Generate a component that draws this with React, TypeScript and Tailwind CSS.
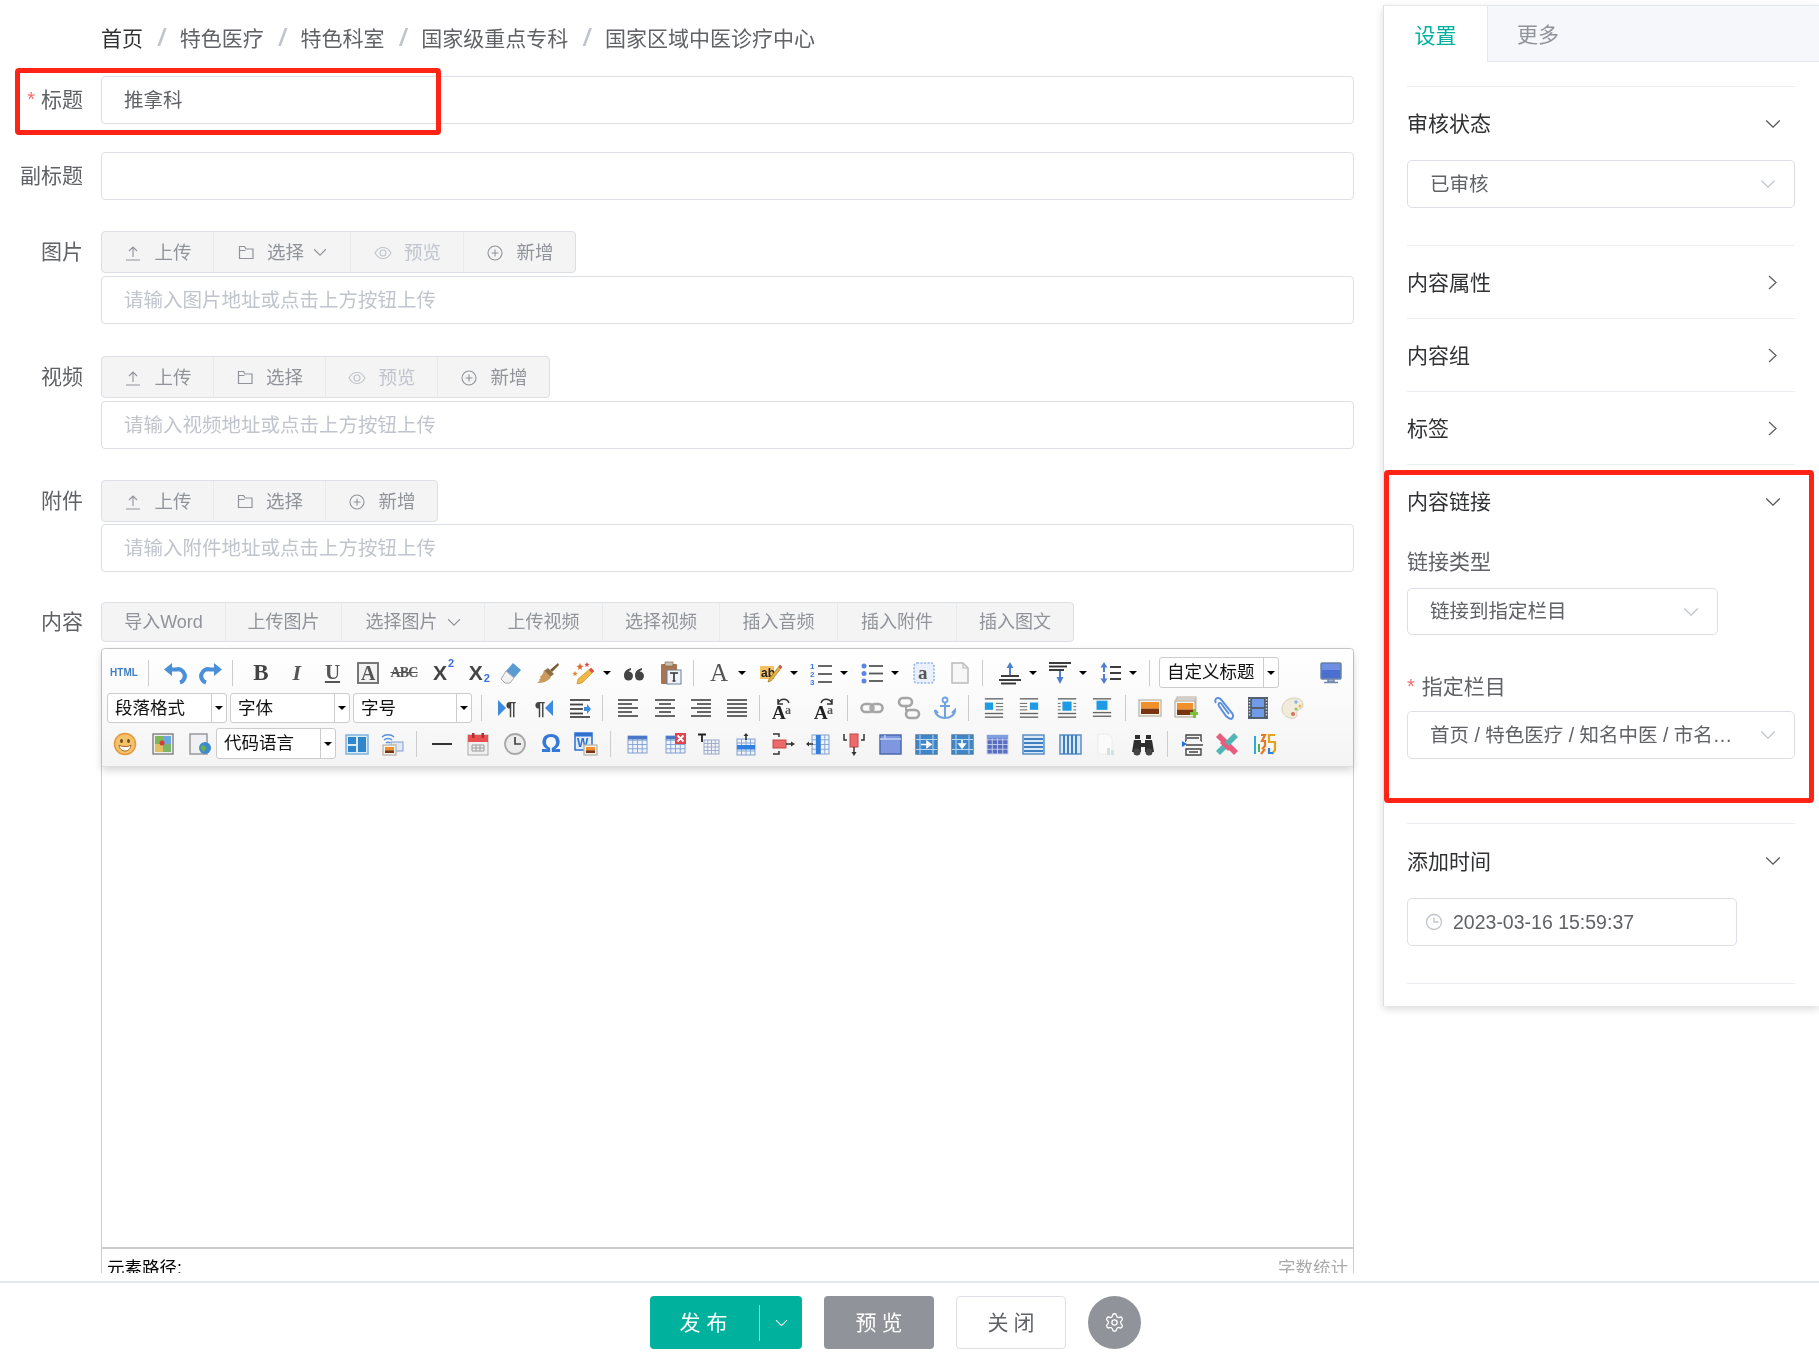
import React from "react";
import { Settings } from "lucide-react";

const ChevDown = ({ c = "#606266", w = 16, sw = 1.3 }: { c?: string; w?: number; sw?: number }) => (
  <svg width={w} height={w * 0.6} viewBox="0 0 16 10" fill="none" stroke={c} strokeWidth={sw}>
    <path d="M1 1.5 8 8.5 15 1.5" />
  </svg>
);
const ChevRight = () => (
  <svg width="9" height="15" viewBox="0 0 9 15" fill="none" stroke="#606266" strokeWidth="1.3">
    <path d="M1 1 8 7.5 1 14" />
  </svg>
);
const UploadI = () => (
  <svg width="16" height="16" viewBox="0 0 16 16" fill="none" stroke="#909399" strokeWidth="1.1">
    <path d="M8 12V2M4 6l4-4 4 4M1 15h14" />
  </svg>
);
const FolderI = () => (
  <svg width="17" height="15" viewBox="0 0 17 15" fill="none" stroke="#909399" strokeWidth="1.2">
    <path d="M1.5 13.5V1.5h5l1.5 2.5h7v9.5zM1.5 5.5h6" />
  </svg>
);
const EyeI = () => (
  <svg width="18" height="14" viewBox="0 0 18 14" fill="none" stroke="#c0c4cc" strokeWidth="1.1">
    <path d="M1 7c2-3.6 5-5.5 8-5.5S15 3.400 17 7c-2 3.600-5 5.500-8 5.500S3 10.600 1 7z" />
    <circle cx="9" cy="7" r="3" />
  </svg>
);
const PlusI = () => (
  <svg width="16" height="16" viewBox="0 0 16 16" fill="none" stroke="#909399" strokeWidth="1.1">
    <circle cx="8" cy="8" r="7" />
    <path d="M8 4.500v7M4.500 8h7" />
  </svg>
);
const ClockI = () => (
  <svg width="18" height="18" viewBox="0 0 18 18" fill="none" stroke="#c0c4cc" strokeWidth="1.3">
    <circle cx="9" cy="9" r="7.500" />
    <path d="M9 4.500V9h4.500" />
  </svg>
);

/* ---------- editor icons ---------- */
const S = ({ children, w = 24, h = 24 }: { children: React.ReactNode; w?: number; h?: number }) => (
  <svg width={w} height={h} viewBox="0 0 24 24" fill="none">
    {children}
  </svg>
);
const Ls = ({ ys, x1 = 4, x2 = 20, c = "#555", sw = 1.7, short }: { ys: number[]; x1?: number; x2?: number; c?: string; sw?: number; short?: (i: number) => [number, number] }) => (
  <>
    {ys.map((y, i) => {
      const [a, b] = short ? short(i) : [x1, x2];
      return <path key={y} d={`M${a} ${y}H${b}`} stroke={c} strokeWidth={sw} />;
    })}
  </>
);
const Undo = () => (
  <S>
    <path d="M7 8.500h6a6.500 6.500 0 0 1 4 13" stroke="#4a90d9" strokeWidth="4.200" />
    <path d="M1 8.500l8-6.500v13z" fill="#4a90d9" />
  </S>
);
const Redo = () => (
  <S>
    <path d="M17 8.500h-6a6.500 6.500 0 0 0-4 13" stroke="#4a90d9" strokeWidth="4.200" />
    <path d="M23 8.500l-8-6.500v13z" fill="#4a90d9" />
  </S>
);
const Letter = ({ t, cls }: { t: string; cls: string }) => <span className={cls}>{t}</span>;
const ABox = () => (
  <div className="flex h-[22px] w-[22px] items-center justify-center border-2 border-[#777] bg-[#f2f2f2] font-['Liberation_Serif',serif] text-[20px] leading-none font-bold text-[#555]">A</div>
);
const Abc = () => (
  <span className="font-['Liberation_Serif',serif] text-[14px] font-bold tracking-[-0.8px] text-[#555] line-through">ABC</span>
);
const Sup = ({ sub }: { sub?: boolean }) => (
  <span className="relative font-['Liberation_Sans',sans-serif] text-[21px] leading-none font-bold text-[#444]">
    X
    <span className={sub ? "absolute top-[11px] left-[15px] text-[11px] text-[#3a6fe0]" : "absolute top-[-4px] left-[15px] text-[11px] text-[#3a6fe0]"}>2</span>
  </span>
);
const Eraser = () => (
  <S>
    <path d="M14 2l8 7-7 8-8-7z" fill="#5b9bd5" />
    <path d="M7 10l8 7-4 5H6l-4-4z" fill="#f2f2f2" stroke="#aaa" />
  </S>
);
const Brush = () => (
  <S>
    <path d="M23 2l-8 7 2 2 7-7z" fill="#7a5a30" />
    <path d="M13 7l6 6-4 3-6-6z" fill="#8c6d46" />
    <path d="M9 9l7 7c-3 5-9 6-14 6 3-2 3-3 2-4 2 0 2-1 1-3 2 0 3-2 4-6z" fill="#c99a5b" />
  </S>
);
const Wand = () => (
  <S>
    <path d="M20 7l3 3-12 12-5 1 1-5z" fill="#f0b840" stroke="#b8862b" strokeWidth=".6" />
    <path d="M20 7l3 3-2 2-3-3z" fill="#e04a4a" />
    <path d="M9 2l1 2.500 2.500.5-2 1.500.5 2.500-2-1.500-2 1.500.5-2.500-2-1.500 2.500-.5z" fill="#e8662a" />
    <path d="M16 1l.8 1.800 1.800.2-1.400 1.200.4 1.800-1.600-1-1.600 1 .4-1.800L13.400 3l1.800-.2z" fill="#e04a4a" />
    <path d="M4 10l.8 1.800 1.800.2-1.400 1.200.4 1.800L4 14l-1.600 1 .4-1.800L1.400 12l1.800-.2z" fill="#e8862a" />
  </S>
);
const Quote = () => (
  <S>
    <circle cx="6.500" cy="15" r="4.500" fill="#444" />
    <path d="M2 15c0-5 3-7 7-8v2c-2 .5-3 2-3 4z" fill="#444" />
    <circle cx="17.500" cy="15" r="4.500" fill="#444" />
    <path d="M13 15c0-5 3-7 7-8v2c-2 .5-3 2-3 4z" fill="#444" />
  </S>
);
const Paste = () => (
  <S>
    <rect x="3" y="3" width="16" height="20" rx="1" fill="#a9744f" />
    <rect x="7" y="1" width="8" height="4" fill="#c9c2b4" stroke="#7a5a3c" strokeWidth=".6" />
    <rect x="9" y="9" width="14" height="14" fill="#eef3fb" stroke="#6a7f9c" />
    <path d="M12 12h8M16 12v8M14.500 20h3" stroke="#333" strokeWidth="1.600" />
  </S>
);
const FontColor = () => <span className="font-['Liberation_Serif',serif] text-[25px] leading-none text-[#555]">A</span>;
const Highlight = () => (
  <S>
    <rect x="1" y="5" width="14" height="13" fill="#f5c163" />
    <text x="2" y="16" fontSize="12" fontWeight="700" fontFamily="Liberation Sans" fill="#222">ab</text>
    <path d="M21 4l2 2-11 14-3 1 1-3z" fill="#e8b23a" stroke="#8c6a20" strokeWidth=".6" />
    <path d="M21 4l2 2-1.500 2-2-2z" fill="#d9534f" />
  </S>
);
const OL = () => (
  <S>
    <text x="1" y="8" fontSize="8" fontWeight="700" fontFamily="Liberation Sans" fill="#3a78e0">1</text>
    <text x="1" y="16" fontSize="8" fontWeight="700" fontFamily="Liberation Sans" fill="#3a78e0">2</text>
    <text x="1" y="24" fontSize="8" fontWeight="700" fontFamily="Liberation Sans" fill="#3a78e0">3</text>
    <Ls ys={[5, 13, 21]} x1={9} x2={23} sw={1.800} />
  </S>
);
const UL = () => (
  <S>
    <circle cx="4" cy="5" r="2.500" fill="#5b86e0" />
    <circle cx="4" cy="12.500" r="2.500" fill="#5b86e0" />
    <circle cx="4" cy="20" r="2.500" fill="#5b86e0" />
    <Ls ys={[5, 12.500, 20]} x1={9} x2={23} sw={1.800} />
  </S>
);
const DashA = () => (
  <S>
    <rect x="2" y="2" width="20" height="20" rx="3" fill="#eaf1fd" stroke="#8fb4ee" strokeWidth="1.600" strokeDasharray="2 1.500" />
    <text x="6" y="18" fontSize="19" fontWeight="700" fontFamily="Liberation Serif" fill="#555">a</text>
  </S>
);
const Page = () => (
  <S>
    <path d="M4 2h11l5 5v15H4z" fill="#f7f7f7" stroke="#bbb" strokeWidth="1.500" />
    <path d="M15 2v5h5" stroke="#bbb" strokeWidth="1.200" />
  </S>
);
const LineUp = () => (
  <S>
    <path d="M12 1l3.500 6h-2.500v7h-2V7H8.500z" fill="#4f7fcc" />
    <Ls ys={[15, 19, 22.500]} x1={1} x2={20} c="#333" sw={1.900} short={(i) => (i === 0 ? [3, 21] : i === 1 ? [1, 23] : [3, 18])} />
  </S>
);
const LineDown = () => (
  <S>
    <Ls ys={[2, 5.500, 9]} c="#333" sw={1.900} short={(i) => (i === 0 ? [1, 23] : i === 1 ? [1, 19] : [1, 16])} />
    <path d="M11 10v6H8.500l3.500 7 3.500-7H13v-6z" fill="#4f7fcc" />
  </S>
);
const LineBoth = () => (
  <S>
    <path d="M6 1l3.500 5.500H7V11H5V6.500H2.500zM6 23l3.500-5.500H7V13H5v4.500H2.500z" fill="#4f7fcc" />
    <Ls ys={[6, 12, 18]} x1={12} x2={23} c="#333" sw={1.900} />
  </S>
);
const Monitor = () => (
  <S>
    <rect x="2" y="2" width="20" height="16" rx="1" fill="#4a6fd0" stroke="#6f87a8" strokeWidth="1.500" />
    <path d="M3 3h18v6H3z" fill="#6f8fe3" />
    <path d="M9 18h6v3H9zM5 21.500h14" stroke="#6f87a8" strokeWidth="1.500" fill="#9fb0c8" />
  </S>
);
const Pil = ({ rev }: { rev?: boolean }) => (
  <span className="flex items-center">
    {rev ? null : <span className="h-0 w-0 border-y-[8px] border-l-[8px] border-y-transparent border-l-[#3c8be0]" />}
    <span className="font-['Liberation_Sans',sans-serif] text-[19px] leading-none font-bold text-[#444]">¶</span>
    {rev ? <span className="h-0 w-0 border-y-[8px] border-r-[8px] border-y-transparent border-r-[#3c8be0]" /> : null}
  </span>
);
const Indent = () => (
  <S>
    <Ls ys={[4, 8.500, 13, 17.500, 21]} sw={1.800} c="#444" short={(i) => (i === 2 ? [2, 15] : i === 1 ? [2, 15] : i === 3 ? [2, 15] : [2, 22])} />
    <path d="M16 11h3V8l4 5-4 5v-3h-3z" fill="#3c8be0" />
  </S>
);
const Align = ({ m }: { m: "l" | "c" | "r" | "j" }) => {
  const f = (i: number): [number, number] => {
    const sh = i % 2 === 1;
    if (m === "j" || !sh) return [2, 22];
    if (m === "l") return [2, 16];
    if (m === "r") return [8, 22];
    return [6, 18];
  };
  return (
    <S>
      <Ls ys={[4, 8, 12, 16, 20]} sw={1.800} c="#555" short={f} />
    </S>
  );
};
const AaDir = ({ flip }: { flip?: boolean }) => (
  <S>
    <text x="1" y="23" fontSize="19" fontWeight="700" fontFamily="Liberation Serif" fill="#222">A</text>
    <text x="14" y="18" fontSize="12" fontWeight="700" fontFamily="Liberation Serif" fill="#555">a</text>
    {flip ? (
      <path d="M8 7c2-5 8-5 11 0M19 3v5h-5" stroke="#333" strokeWidth="1.500" />
    ) : (
      <path d="M18 7c-2-5-8-5-11 0M7 3v5h5" stroke="#333" strokeWidth="1.500" />
    )}
  </S>
);
const Link1 = () => (
  <S>
    <rect x="1.500" y="8" width="12" height="8" rx="4" stroke="#a5a5a5" strokeWidth="2.600" />
    <rect x="10.500" y="8" width="12" height="8" rx="4" stroke="#a5a5a5" strokeWidth="2.600" />
  </S>
);
const Unlink = () => (
  <S>
    <rect x="2" y="2" width="13" height="8" rx="4" stroke="#a5a5a5" strokeWidth="2.600" />
    <rect x="9" y="14" width="13" height="8" rx="4" stroke="#a5a5a5" strokeWidth="2.600" />
    <path d="M9 10v4h6" stroke="#a5a5a5" strokeWidth="2" />
  </S>
);
const AnchorI = () => (
  <S>
    <circle cx="12" cy="4" r="2.500" stroke="#6fa3dc" strokeWidth="1.800" />
    <path d="M12 6.500V22M7 10h10" stroke="#6fa3dc" strokeWidth="2" />
    <path d="M2 14c0 5 5 8 10 8s10-3 10-8l-3 3M2 14l3 3" stroke="#6fa3dc" strokeWidth="2" />
  </S>
);
const ImgPos = ({ v }: { v: "l" | "r" | "c" | "b" }) => {
  const box = v === "l" ? [2, 6, 9, 8] : v === "r" ? [13, 6, 9, 8] : v === "c" ? [7, 5, 10, 10] : [6, 4, 12, 10];
  return (
    <S w={22} h={22}>
      <rect x={box[0]} y={box[1]} width={box[2]} height={box[3]} fill="#1f9be6" />
      {v === "b" ? (
        <Ls ys={[2, 17, 21]} x1={2} x2={22} c="#666" sw={1.500} />
      ) : (
        <>
          <Ls ys={[2]} x1={2} x2={22} c="#666" sw={1.500} />
          <Ls ys={[18, 22]} x1={2} x2={22} c="#666" sw={1.500} />
          {v === "l" ? <Ls ys={[7, 10.500, 14]} x1={14} x2={22} c="#777" sw={1.200} /> : null}
          {v === "r" ? <Ls ys={[7, 10.500, 14]} x1={2} x2={10} c="#777" sw={1.200} /> : null}
          {v === "c" ? <Ls ys={[7, 10.500, 14]} x1={2} x2={5} c="#777" sw={1.200} /> : null}
          {v === "c" ? <Ls ys={[7, 10.500, 14]} x1={19} x2={22} c="#777" sw={1.200} /> : null}
        </>
      )}
    </S>
  );
};
const Sunset = ({ x, y, w, h }: { x: number; y: number; w: number; h: number }) => (
  <>
    <rect x={x} y={y} width={w} height={h} fill="#f6f4ef" stroke="#b5b0a5" strokeWidth="1.200" />
    <rect x={x + 2} y={y + 2} width={w - 4} height={(h - 4) * 0.55} fill="#f0902a" />
    <rect x={x + 2} y={y + 2 + (h - 4) * 0.55} width={w - 4} height={(h - 4) * 0.45} fill="#7a3510" />
  </>
);
const ImageI = () => (
  <S>
    <Sunset x={1} y={4} w={22} h={16} />
  </S>
);
const Multi = () => (
  <S>
    <rect x="3" y="1" width="19" height="14" fill="#f2eee5" stroke="#b5b0a5" />
    <rect x="2" y="3" width="19" height="14" fill="#f2eee5" stroke="#b5b0a5" />
    <Sunset x={1} y={5} w={20} h={16} />
    <path d="M19 13h3v3h2v3h-2v3h-3v-3h-3v-3h3z" fill="#7cbf3a" />
  </S>
);
const Clip = () => (
  <S>
    <path d="M4 7c-2-3 0-5 2-5s3 1 5 4l9 11c2 3 1 5-1 6-2 0-3-1-5-3L7 10c-1-2 0-3 1-3s2 1 3 3l6 8" stroke="#5b8fe0" strokeWidth="2" />
  </S>
);
const Film = () => (
  <S>
    <rect x="2" y="1" width="20" height="22" fill="#55606e" />
    <rect x="6" y="3" width="12" height="8" fill="#6f9be8" />
    <rect x="6" y="13" width="12" height="8" fill="#6f9be8" />
    <path d="M3.500 3v18M20.500 3v18" stroke="#c6ccd4" strokeWidth="1.500" strokeDasharray="1.500 1.500" />
  </S>
);
const Palette = () => (
  <S>
    <path d="M2 13C2 6 8 2 15 2c5 0 8 3 8 7 0 4-3 4-5 5-2 1-1 3-1 5 0 3-4 4-7 3-4-1-8-4-8-9z" fill="#f1ecd9" stroke="#d4cfbd" />
    <circle cx="16" cy="6" r="1.800" fill="#8db4e8" />
    <circle cx="20" cy="10" r="1.500" fill="#e8b85a" />
    <circle cx="16" cy="13" r="1.500" fill="#9fc15b" />
    <circle cx="13" cy="18" r="2" fill="#d9705a" />
  </S>
);
const Emoji = () => (
  <S>
    <circle cx="12" cy="12" r="10.500" fill="#f4c26b" stroke="#e49a3d" strokeWidth="1.500" />
    <ellipse cx="8.500" cy="9" rx="1.400" ry="2" fill="#6a4a1a" />
    <ellipse cx="15.500" cy="9" rx="1.400" ry="2" fill="#6a4a1a" />
    <path d="M6 13c2 2 10 2 12 0-.5 4-3 6-6 6s-5.500-2-6-6z" fill="#fff" stroke="#a5651f" />
  </S>
);
const MapI = () => (
  <S>
    <rect x="2" y="2" width="20" height="20" fill="#eee" stroke="#888" strokeWidth="1.500" />
    <rect x="4" y="4" width="8" height="8" fill="#7fb85a" />
    <rect x="12" y="4" width="8" height="8" fill="#6aa8e0" />
    <rect x="4" y="12" width="8" height="8" fill="#e0c060" />
    <rect x="12" y="12" width="8" height="8" fill="#79b56a" />
    <circle cx="11" cy="11" r="2.500" fill="#d83a3a" />
  </S>
);
const Web = () => (
  <S>
    <rect x="2" y="2" width="17" height="20" fill="#eef0f4" stroke="#999" strokeWidth="1.500" />
    <circle cx="17" cy="16" r="6" fill="#3d8ad0" />
    <path d="M13 14c2-2 4 0 5 1s-1 3-2 5c-2-1-4-3-3-6z" fill="#6db04a" />
  </S>
);
const Tpl = () => (
  <S>
    <rect x="1" y="3" width="22" height="19" fill="#dcebf8" stroke="#7fb2dd" strokeWidth="1.500" />
    <rect x="3" y="5" width="8" height="7" fill="#2f86cc" />
    <rect x="13" y="5" width="8" height="15" fill="#2f86cc" />
    <rect x="3" y="14" width="8" height="6" fill="#2f86cc" />
  </S>
);
const WifiImg = () => (
  <S>
    <path d="M2 5c3-3 9-3 12 0M4 8c2-2 6-2 8 0M6 11c1-1 3-1 4 0" stroke="#5b8fe0" strokeWidth="1.500" />
    <rect x="11" y="10" width="12" height="9" fill="#dfe8f5" stroke="#7f9fd0" />
    <Sunset x={3} y={13} w={13} h={10} />
  </S>
);
const Hr = () => (
  <S>
    <path d="M2 12h20" stroke="#333" strokeWidth="2" />
  </S>
);
const Cal = () => (
  <S>
    <rect x="2" y="3" width="20" height="20" fill="#f0f0f0" stroke="#aaa" />
    <rect x="2" y="3" width="20" height="7" fill="#e85050" />
    <rect x="6" y="1" width="2.500" height="5" fill="#b03030" />
    <rect x="15.500" y="1" width="2.500" height="5" fill="#b03030" />
    <path d="M6 13h12v6H6zM6 16h12M10 13v6M14 13v6" stroke="#999" strokeWidth="1" />
  </S>
);
const Clock = () => (
  <S>
    <circle cx="12" cy="12" r="10" fill="#ececec" stroke="#a8a8a8" strokeWidth="1.800" />
    <path d="M12 5v7h6" stroke="#444" strokeWidth="1.700" />
  </S>
);
const Omega = () => <span className="font-['Liberation_Sans',sans-serif] text-[25px] leading-none font-bold text-[#3478dc]">Ω</span>;
const Word = () => (
  <S>
    <rect x="1" y="1" width="17" height="17" fill="#dfeafa" stroke="#2f6fd0" strokeWidth="1.500" />
    <rect x="1" y="1" width="17" height="3.500" fill="#2f6fd0" />
    <text x="3" y="15" fontSize="12" fontWeight="700" fontFamily="Liberation Sans" fill="#2f6fd0">W</text>
    <Sunset x={10} y={13} w={13} h={10} />
  </S>
);
const Grid = ({ top = true, x = 3, y = 4, w = 19, h = 17, c = "#7f9fd0", fill = "#eef3fb" }: { top?: boolean; x?: number; y?: number; w?: number; h?: number; c?: string; fill?: string }) => {
  const vs = [1, 2, 3].map((i) => x + (w * i) / 4);
  const hs = [1, 2, 3].map((i) => y + (h * i) / 4);
  return (
    <>
      <rect x={x} y={y} width={w} height={h} fill={fill} stroke={c} />
      {vs.map((v) => <path key={v} d={`M${v} ${y}v${h}`} stroke={c} strokeWidth=".9" />)}
      {hs.map((v) => <path key={v} d={`M${x} ${v}h${w}`} stroke={c} strokeWidth=".9" />)}
      {top ? <rect x={x} y={y} width={w} height={h / 5} fill="#4a78c8" /> : null}
    </>
  );
};
const T1 = () => <S><Grid /></S>;
const TDel = () => (
  <S>
    <Grid />
    <rect x="12" y="1" width="11" height="11" fill="#e8404a" />
    <path d="M14.500 3.500l6 6m0-6l-6 6" stroke="#fff" strokeWidth="2" />
  </S>
);
const TT = () => (
  <S>
    <path d="M1 2.500h8M5 2.500V10" stroke="#222" strokeWidth="1.800" />
    <Grid top={false} x={7} y={8} w={15} h={14} c="#9aa8c4" />
  </S>
);
const RowIns = () => (
  <S>
    <Grid top={false} x={3} y={7} w={18} h={16} />
    <rect x="3" y="13" width="18" height="4.500" fill="#2f80e0" />
    <path d="M12 1l-2.500 3h1.700v4h1.600V4h1.700z" fill="#333" />
  </S>
);
const RowDel = () => (
  <S>
    <path d="M8 5V2H2M8 19v3H2" stroke="#333" strokeWidth="1.500" />
    <rect x="2" y="8" width="13" height="8" fill="#ee6a6a" stroke="#c04848" />
    <path d="M15 12h6" stroke="#333" strokeWidth="1.500" />
    <path d="M24 12l-4-2.500v5z" fill="#333" />
  </S>
);
const ColIns = () => (
  <S>
    <Grid top={false} x={6} y={3} w={17} h={19} />
    <rect x="10" y="3" width="4.500" height="19" fill="#2f80e0" />
    <path d="M0 12l3 2.500v-1.700h4v-1.600H3V9.500z" fill="#333" />
  </S>
);
const ColDel = () => (
  <S>
    <path d="M5 8H2V2M19 8h3V2" stroke="#333" strokeWidth="1.500" />
    <rect x="8" y="2" width="8" height="13" fill="#ee6a6a" stroke="#c04848" />
    <path d="M12 15v5" stroke="#333" strokeWidth="1.500" />
    <path d="M12 24l-2.500-4h5z" fill="#333" />
  </S>
);
const Merge = () => (
  <S>
    <rect x="2" y="3" width="21" height="19" fill="#7f97e0" stroke="#4a6aae" strokeWidth="1.500" />
    <path d="M2 7h21M7 3v4" stroke="#c5d4f2" strokeWidth="1.300" />
  </S>
);
const Split = ({ down }: { down?: boolean }) => (
  <S>
    <rect x="2" y="3" width="21" height="19" fill="#3f86c8" stroke="#4a7fb0" strokeWidth="1.500" />
    <path d="M2 7.500h21M2 17.500h21M6 3v19M19 3v19" stroke="#bcd8f0" strokeWidth="1" />
    {down ? (
      <path d="M12 8v6M9 12l3 4 3-4z" stroke="#fff" strokeWidth="1.600" fill="#fff" />
    ) : (
      <path d="M7 12.500h8M13 9.500l4 3-4 3z" stroke="#fff" strokeWidth="1.600" fill="#fff" />
    )}
  </S>
);
const Cells = () => (
  <S>
    <Grid top={false} x={2} y={3} w={21} h={19} c="#c8d4ee" fill="#5a6cc0" />
    <rect x="2" y="3" width="21" height="3.500" fill="#7fa0dd" />
  </S>
);
const Rows = () => (
  <S>
    <rect x="2" y="3" width="21" height="19" fill="#dbe8f6" stroke="#5a8fc4" strokeWidth="1.500" />
    <path d="M3 7h19M3 11h19M3 15h19M3 19h19" stroke="#3f80c0" strokeWidth="2.200" />
  </S>
);
const Cols = () => (
  <S>
    <rect x="2" y="3" width="21" height="19" fill="#dbe8f6" stroke="#5a8fc4" strokeWidth="1.500" />
    <path d="M6 3v19M10 3v19M14 3v19M18 3v19" stroke="#3f80c0" strokeWidth="2" />
  </S>
);
const Faint = () => (
  <S>
    <path d="M5 2h10l4 4v16H5z" fill="#fbfbfb" stroke="#ececec" />
    <rect x="14" y="16" width="3" height="7" fill="#cfe4d4" />
    <rect x="18" y="18" width="3" height="5" fill="#cfe0ee" />
  </S>
);
const Binoc = () => (
  <S>
    <path d="M4 3h5v4H4zM15 3h5v4h-5zM3 8h7v3h4V8h7l2 12h-9v-5h-4v5H1z" fill="#2e2e2e" />
    <circle cx="6" cy="20" r="3.500" fill="#444" />
    <circle cx="18" cy="20" r="3.500" fill="#444" />
  </S>
);
const PrintI = () => (
  <S>
    <path d="M5 9V3h15v6M5 9h-1M20 9h1M6 6h12" stroke="#444" strokeWidth="1.400" />
    <path d="M5 13H22M5 23v-6h15v6zM8 20h9" stroke="#444" strokeWidth="1.400" />
    <path d="M1 9l5 3-5 3z" fill="#2f6fd0" />
  </S>
);
const XI = () => (
  <S>
    <path d="M5 1l18 18-4 4L1 5z" fill="#e85d7d" />
    <path d="M19 1L1 19l4 4L23 5z" fill="#4fb5b5" />
    <path d="M8 8l8 8-3 3-8-8z" fill="#e85d7d" />
  </S>
);
const Num = () => (
  <S>
    <path d="M2 4v18" stroke="#2ea8e0" strokeWidth="2" />
    <path d="M8 3h4l-3 6h3v5l-3 3M8 22l4-5" stroke="#ea7a20" strokeWidth="2.200" />
    <path d="M22 3h-6v7h6v8l-3 4" stroke="#e8a020" strokeWidth="2.200" />
    <path d="M16 16v5h4" stroke="#2f80e0" strokeWidth="2.200" />
    <path d="M6 12v8" stroke="#55b04a" strokeWidth="2" />
  </S>
);

const C = ({ c = "", w = "w-[36px]", children }: { c?: string; w?: string; children: React.ReactNode }) => (
  <div className={`flex h-full shrink-0 items-center justify-center ${w} ${c}`}>{children}</div>
);
const Dd = ({ c = "w-[34px]", children }: { c?: string; children: React.ReactNode }) => (
  <>
    <div className={`flex h-full shrink-0 items-center justify-center ${c}`}>{children}</div>
    <div className="flex h-full w-[12px] shrink-0 items-center justify-center">
      <span className="h-0 w-0 border-x-[4px] border-t-[4px] border-x-transparent border-t-black" />
    </div>
  </>
);
const Sep = ({ c = "" }: { c?: string }) => <div className={`h-[26px] w-px shrink-0 bg-[#ccc] ${c}`} />;
const TbSelect = ({ text, c = "w-[120px]" }: { text: string; c?: string }) => (
  <div className={`flex h-full shrink-0 items-center rounded-[3px] border border-[#ccc] bg-white text-[17.500px] text-[#111] ${c}`}>
    <span className="flex-1 pl-[7px] whitespace-nowrap">{text}</span>
    <span className="flex h-full w-[15px] shrink-0 items-center justify-center border-l border-[#ccc]">
      <span className="h-0 w-0 border-x-[4px] border-t-[4px] border-x-transparent border-t-black" />
    </span>
  </div>
);

const W = "w-[35.800px]";
const Toolbar = () => (
  <div className="flex h-[118px] flex-col gap-[5px] rounded-t-[4px] border-b border-[#ddd] bg-gradient-to-b from-white to-[#f4f4f4] pt-[8px] pb-[7px] shadow-[0_3px_8px_rgba(0,0,0,0.18)]">
    <div className="flex h-[31px] items-center pl-[3px]">
      <C w="w-[38px]"><span className="font-['Liberation_Sans',sans-serif] text-[10px] font-bold text-[#3d7fbf]">HTML</span></C>
      <Sep c="ml-[5px]" />
      <C c="ml-[8px]"><Undo /></C>
      <C><Redo /></C>
      <Sep c="ml-[3px]" />
      <div className="ml-[10px] flex h-full">
        <C w={W}><Letter t="B" cls="font-['Liberation_Serif',serif] text-[23px] leading-none font-bold text-[#444]" /></C>
        <C w={W}><Letter t="I" cls="font-['Liberation_Serif',serif] text-[22px] leading-none font-bold text-[#555] italic" /></C>
        <C w={W}><Letter t="U" cls="font-['Liberation_Serif',serif] text-[21px] leading-none font-bold text-[#555] underline" /></C>
        <C w={W}><ABox /></C>
        <C w={W}><Abc /></C>
        <C w={W}><Sup /></C>
        <C w={W}><Sup sub /></C>
        <C w={W}><Eraser /></C>
        <C w={W}><Brush /></C>
        <C w={W}><Wand /></C>
      </div>
      <div className="flex h-full w-[12px] shrink-0 items-center justify-center">
        <span className="h-0 w-0 border-x-[4px] border-t-[4px] border-x-transparent border-t-black" />
      </div>
      <C c="ml-[3px]"><Quote /></C>
      <C><Paste /></C>
      <Sep c="ml-[5px]" />
      <div className="ml-[8px] flex h-full"><Dd><FontColor /></Dd></div>
      <div className="ml-[6px] flex h-full"><Dd><Highlight /></Dd></div>
      <div className="ml-[4px] flex h-full"><Dd><OL /></Dd></div>
      <div className="ml-[5px] flex h-full"><Dd><UL /></Dd></div>
      <C c="ml-[5px]"><DashA /></C>
      <C><Page /></C>
      <Sep c="ml-[4px]" />
      <div className="ml-[10px] flex h-full"><Dd><LineUp /></Dd></div>
      <div className="ml-[4px] flex h-full"><Dd><LineDown /></Dd></div>
      <div className="ml-[4px] flex h-full"><Dd><LineBoth /></Dd></div>
      <Sep c="ml-[10px]" />
      <TbSelect text="自定义标题" c="ml-[9px] w-[120px]" />
      <C c="mr-[4px] ml-auto"><Monitor /></C>
    </div>
    <div className="flex h-[30px] items-center pl-[5px]">
      <TbSelect text="段落格式" />
      <TbSelect text="字体" c="ml-[3px] w-[120px]" />
      <TbSelect text="字号" c="ml-[3px] w-[119px]" />
      <Sep c="ml-[9px]" />
      <C c="ml-[7px]"><Pil /></C>
      <C c="ml-px"><Pil rev /></C>
      <C><Indent /></C>
      <Sep c="ml-[4px]" />
      <C c="ml-[7px]"><Align m="l" /></C>
      <C c="ml-px"><Align m="c" /></C>
      <C><Align m="r" /></C>
      <C><Align m="j" /></C>
      <Sep c="ml-[4px]" />
      <C c="ml-[5px]"><AaDir /></C>
      <C c="ml-[6px]"><AaDir flip /></C>
      <Sep c="ml-[4px]" />
      <C c="ml-[6px]"><Link1 /></C>
      <C c="ml-[1px]"><Unlink /></C>
      <C><AnchorI /></C>
      <Sep c="ml-[5px]" />
      <C c="ml-[7px]"><ImgPos v="l" /></C>
      <C c="ml-[-1px]"><ImgPos v="r" /></C>
      <C c="ml-[2px]"><ImgPos v="c" /></C>
      <C c="ml-[-1px]"><ImgPos v="b" /></C>
      <Sep c="ml-[5px]" />
      <C c="ml-[6px]"><ImageI /></C>
      <C c="ml-[0px]"><Multi /></C>
      <C c="ml-[2px]"><Clip /></C>
      <C c="ml-[-2px]"><Film /></C>
      <C c="ml-[-2px]"><Palette /></C>
    </div>
    <div className="flex h-[31px] items-center pl-[5px]">
      <C><Emoji /></C>
      <C c="ml-[2px]"><MapI /></C>
      <C w="w-[33px]" c="ml-[2px]"><Web /></C>
      <TbSelect text="代码语言" />
      <C c="ml-[3px]"><Tpl /></C>
      <C c="ml-[-1px]"><WifiImg /></C>
      <Sep c="ml-[6px]" />
      <C c="ml-[7px]"><Hr /></C>
      <C><Cal /></C>
      <C c="ml-px"><Clock /></C>
      <C><Omega /></C>
      <C c="ml-[-1px]"><Word /></C>
      <Sep c="ml-[6px]" />
      <C c="ml-[8px]"><T1 /></C>
      <C c="ml-[2px]"><TDel /></C>
      <C c="ml-[-2px]"><TT /></C>
      <C c="ml-px"><RowIns /></C>
      <C c="ml-px"><RowDel /></C>
      <C c="ml-[-1px]"><ColIns /></C>
      <C><ColDel /></C>
      <C><Merge /></C>
      <C><Split /></C>
      <C><Split down /></C>
      <C c="ml-[-1px]"><Cells /></C>
      <C><Rows /></C>
      <C c="ml-px"><Cols /></C>
      <C c="ml-[-1px]"><Faint /></C>
      <C c="ml-[2px]"><Binoc /></C>
      <Sep c="ml-[6px]" />
      <C c="ml-[7px]"><PrintI /></C>
      <C c="ml-[-2px]"><XI /></C>
      <C c="ml-[2px]"><Num /></C>
    </div>
  </div>
);

const Seg = ({ w, children, last }: { w: string; children: React.ReactNode; last?: boolean }) => (
  <div className={`flex h-full items-center justify-center pt-[1px] ${w} ${last ? "" : "border-r border-[#e8eaee]"}`}>{children}</div>
);
const Group = ({ children }: { children: React.ReactNode }) => (
  <div className="flex h-[42px] w-fit items-center rounded-[4px] border border-[#dcdfe6] bg-[#f4f4f5] text-[18.500px] text-[#909399]">
    {children}
  </div>
);
const IconBtn = ({ w, icon, text, last, chev, light, g = "ml-[11px]" }: { w: string; icon: React.ReactNode; text: string; last?: boolean; chev?: boolean; light?: boolean; g?: string }) => (
  <Seg w={w} last={last}>
    <span className="flex w-[20px] justify-center">{icon}</span>
    <span className={`${g} ${light ? "text-[#c0c4cc]" : ""}`}>{text}</span>
    {chev ? <span className="ml-[9px]"><ChevDown c="#909399" w={14} /></span> : null}
  </Seg>
);
const Label = ({ text, star, h = "h-[48px]" }: { text: string; star?: boolean; h?: string }) => (
  <div className={`flex w-[83px] shrink-0 items-center justify-end text-[21px] text-[#606266] ${h}`}>
    {star ? <span className="mt-[-3px] mr-[6px] text-[20px] text-[#f56c6c]">*</span> : null}
    {text}
  </div>
);
const TextIn = ({ value, ph }: { value?: string; ph?: string }) => (
  <div className={`flex h-[48px] w-[1253px] items-center rounded-[4px] border border-[#dcdfe6] bg-white pt-[1px] pl-[22px] text-[19.500px] ${ph ? "text-[#c0c4cc]" : "text-[#606266]"}`}>
    {value ?? ph}
  </div>
);
const Slash = () => <span className="mx-[15.200px] font-['Liberation_Sans',sans-serif] text-[23px] font-bold text-[#c0c4cc] italic">/</span>;

const Head = ({ text, open, h }: { text: string; open?: boolean; h: string }) => (
  <div className={`flex items-center justify-between pr-[14px] text-[21px] text-[#303133] ${h}`}>
    <span className="pt-[1px]">{text}</span>
    {open ? <ChevDown c="#555" w={16} /> : <span className="mr-[4px]"><ChevRight /></span>}
  </div>
);
const Sel = ({ text, c }: { text: string; c: string }) => (
  <div className={`flex items-center justify-between rounded-[5px] border border-[#dcdfe6] bg-white pr-[18px] pl-[22px] text-[19.500px] text-[#606266] ${c}`}>
    <span className="pt-[1px] whitespace-nowrap">{text}</span>
    <ChevDown c="#c0c4cc" w={16} />
  </div>
);

export default function App() {
  return (
    <div className="relative flex h-[1364px] w-[1819px] flex-col overflow-hidden bg-white font-['Liberation_Sans','Noto_Sans_CJK_SC',sans-serif] blur-[0.35px]">
      <div className="flex h-[1281px] items-start">
        <div className="h-[1273px] w-[1383px] shrink-0 overflow-hidden">
          <div className="flex h-[76px] items-center pt-[1px] pl-[101px] text-[21px] text-[#606266]">
            <span className="text-[#303133]">首页</span>
            <Slash />
            <span>特色医疗</span>
            <Slash />
            <span>特色科室</span>
            <Slash />
            <span>国家级重点专科</span>
            <Slash />
            <span>国家区域中医诊疗中心</span>
          </div>
          <div className="flex gap-[18px]">
            <Label text="标题" star />
            <TextIn value="推拿科" />
          </div>
          <div className="mt-[28px] flex gap-[18px]">
            <Label text="副标题" />
            <TextIn />
          </div>
          <div className="mt-[31px] flex gap-[18px]">
            <Label text="图片" h="h-[42px]" />
            <div className="flex flex-col gap-[3px]">
              <Group>
                <IconBtn w="w-[112px]" icon={<UploadI />} text="上传" />
                <IconBtn w="w-[137px]" icon={<FolderI />} text="选择" chev g="ml-[10px]" />
                <IconBtn w="w-[113px]" icon={<EyeI />} text="预览" light />
                <IconBtn w="w-[111px]" icon={<PlusI />} text="新增" last />
              </Group>
              <TextIn ph="请输入图片地址或点击上方按钮上传" />
            </div>
          </div>
          <div className="mt-[32px] flex gap-[18px]">
            <Label text="视频" h="h-[42px]" />
            <div className="flex flex-col gap-[3px]">
              <Group>
                <IconBtn w="w-[112px]" icon={<UploadI />} text="上传" />
                <IconBtn w="w-[112px]" icon={<FolderI />} text="选择" g="ml-[10px]" />
                <IconBtn w="w-[112px]" icon={<EyeI />} text="预览" light />
                <IconBtn w="w-[111px]" icon={<PlusI />} text="新增" last />
              </Group>
              <TextIn ph="请输入视频地址或点击上方按钮上传" />
            </div>
          </div>
          <div className="mt-[31px] flex gap-[18px]">
            <Label text="附件" h="h-[42px]" />
            <div className="flex flex-col gap-[2px]">
              <Group>
                <IconBtn w="w-[112px]" icon={<UploadI />} text="上传" />
                <IconBtn w="w-[112px]" icon={<FolderI />} text="选择" g="ml-[10px]" />
                <IconBtn w="w-[111px]" icon={<PlusI />} text="新增" last />
              </Group>
              <TextIn ph="请输入附件地址或点击上方按钮上传" />
            </div>
          </div>
          <div className="mt-[30px] flex gap-[18px]">
            <Label text="内容" h="h-[40px]" />
            <div className="flex flex-col gap-[6px]">
              <div className="flex h-[40px] w-fit items-center rounded-[4px] border border-[#dcdfe6] bg-[#f4f4f5] text-[18px] text-[#909399]">
                <Seg w="w-[124px]">导入Word</Seg>
                <Seg w="w-[116px]">上传图片</Seg>
                <Seg w="w-[143px]">选择图片<span className="ml-[9px]"><ChevDown c="#909399" w={14} /></span></Seg>
                <Seg w="w-[118px]">上传视频</Seg>
                <Seg w="w-[117px]">选择视频</Seg>
                <Seg w="w-[118px]">插入音频</Seg>
                <Seg w="w-[119px]">插入附件</Seg>
                <Seg w="w-[116px]" last>插入图文</Seg>
              </div>
              <div className="flex h-[640px] w-[1253px] flex-col rounded-t-[4px] border border-[#ccc] bg-white">
                <Toolbar />
                <div className="h-[482px] border-b-2 border-[#ccc]" />
                <div className="flex items-start justify-between px-[5px] pt-[7px] text-[17.500px] leading-[24px]">
                  <span className="text-black">元素路径:</span>
                  <span className="text-[#aaa]">字数统计</span>
                </div>
              </div>
            </div>
          </div>
        </div>

        <div className="mt-[5px] flex h-[1001px] w-[436px] shrink-0 flex-col border-l border-[#dcdfe6] bg-white shadow-[0_3px_8px_rgba(0,0,0,0.15)]">
          <div className="flex h-[57px] shrink-0 border-t border-[#e4e7ed] text-[21px]">
            <div className="flex w-[103px] items-center justify-center pt-[3px] text-[#00b19d]">设置</div>
            <div className="flex flex-1 items-center border-b border-l border-[#e4e7ed] bg-[#f5f7fa] pt-[2px] pl-[29px] text-[#909399]">更多</div>
          </div>
          <div className="mt-[24px] pr-[24px] pl-[23px]">
            <div className="border-t border-[#ebeef5]">
              <Head text="审核状态" open h="h-[73px]" />
              <Sel text="已审核" c="h-[48px] w-full" />
              <div className="h-[37px]" />
            </div>
            <div className="border-t border-[#ebeef5]">
              <Head text="内容属性" h="h-[72px]" />
            </div>
            <div className="border-t border-[#ebeef5]">
              <Head text="内容组" h="h-[72px]" />
            </div>
            <div className="border-t border-[#ebeef5]">
              <Head text="标签" h="h-[72px]" />
            </div>
            <div className="border-t border-[#ebeef5]">
              <Head text="内容链接" open h="h-[73px]" />
              <div className="mt-[3px] flex h-[42px] items-center text-[21px] text-[#606266]">链接类型</div>
              <Sel text="链接到指定栏目" c="mt-[5px] h-[47px] w-[311px]" />
              <div className="mt-[31px] flex h-[42px] items-center text-[21px] text-[#606266]">
                <span className="mt-[-3px] mr-[7px] text-[20px] text-[#f56c6c]">*</span>指定栏目
              </div>
              <Sel text="首页 / 特色医疗 / 知名中医 / 市名…" c="mt-[3px] h-[48px] w-full" />
              <div className="h-[64px]" />
            </div>
            <div className="border-t border-[#ebeef5]">
              <Head text="添加时间" open h="h-[74px]" />
              <div className="flex h-[48px] w-[330px] items-center rounded-[5px] border border-[#dcdfe6] pl-[17px] text-[19.500px] text-[#606266]">
                <ClockI />
                <span className="ml-[10px] pt-[1px]">2023-03-16 15:59:37</span>
              </div>
              <div className="h-[37px]" />
            </div>
            <div className="border-t border-[#ebeef5]" />
          </div>
        </div>
      </div>

      <div className="relative z-10 flex h-[83px] items-start gap-[22px] border-t-2 border-[#e4e7ed] bg-white pt-[13px] pl-[650px]">
        <div className="flex h-[53px] w-[152px] items-center rounded-[4px] bg-[#00b19d] text-white">
          <span className="flex h-[36px] w-[110px] items-center justify-center border-r border-white/50 pl-[4px] text-[21px] tracking-[6px]">发布</span>
          <span className="flex flex-1 justify-center"><ChevDown c="#fff" w={13} /></span>
        </div>
        <div className="flex h-[53px] w-[110px] items-center justify-center rounded-[4px] bg-[#909399] pl-[5px] text-[21px] tracking-[5px] text-white">预览</div>
        <div className="flex h-[53px] w-[110px] items-center justify-center rounded-[4px] border border-[#dcdfe6] pl-[5px] text-[21px] tracking-[5px] text-[#606266]">关闭</div>
        <div className="flex h-[53px] w-[53px] items-center justify-center rounded-full bg-[#909399] text-white"><Settings size={21} strokeWidth={1.500} /></div>
      </div>

      <div className="absolute top-[68px] left-[15px] h-[67px] w-[426px] rounded-[4px] border-[5px] border-[#ff2415]" />
      <div className="absolute top-[470px] left-[1384px] h-[333px] w-[430px] rounded-[4px] border-[5px] border-[#ff2415]" />
    </div>
  );
}
